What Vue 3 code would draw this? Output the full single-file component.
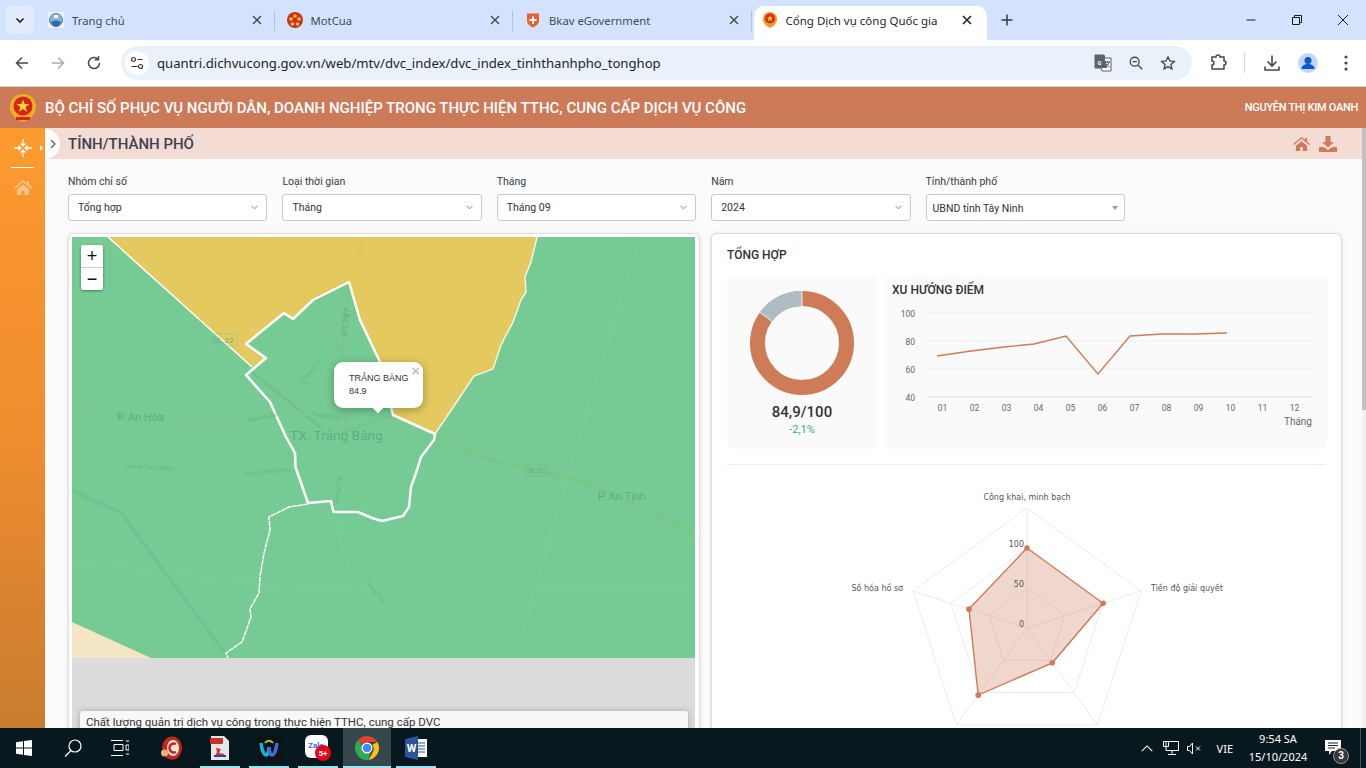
<script setup>
const tabs = [
  { title: 'Trang chủ', icon: 'globe' },
  { title: 'MotCua', icon: 'motcua' },
  { title: 'Bkav eGovernment', icon: 'bkav' }
]
const filters = [
  { label: 'Nhóm chỉ số', value: 'Tổng hợp' },
  { label: 'Loại thời gian', value: 'Tháng' },
  { label: 'Tháng', value: 'Tháng 09' },
  { label: 'Năm', value: '2024' },
  { label: 'Tỉnh/thành phố', value: 'UBND tỉnh Tây Ninh', native: true }
]

// line chart
const yTicks = [
  { label: '100', y: 313 },
  { label: '80', y: 341 },
  { label: '60', y: 369 },
  { label: '40', y: 397 }
]
const months = ['01', '02', '03', '04', '05', '06', '07', '08', '09', '10', '11', '12']
const trend = '937,356 971,351 1004,347 1034,344 1066,336 1098,374 1130,336 1162,334 1194,334 1227,333'

// radar
const cx = 185
const cy = 148
const angle = (i) => ((-90 + i * 72) * Math.PI) / 180
const pointsFor = (radii) =>
  radii
    .map((r, i) => `${(cx + r * Math.cos(angle(i))).toFixed(1)},${(cy + r * Math.sin(angle(i))).toFixed(1)}`)
    .join(' ')
const rings = [40, 80, 120].map((r) => pointsFor([r, r, r, r, r]))
const axes = [0, 1, 2, 3, 4].map((i) => ({
  x: cx + 120 * Math.cos(angle(i)),
  y: cy + 120 * Math.sin(angle(i))
}))
const values = [80, 80, 43, 83, 61]
const dots = values.map((r, i) => ({
  x: cx + r * Math.cos(angle(i)),
  y: cy + r * Math.sin(angle(i))
}))
const radarShape = pointsFor(values)

const taskCells = [
  { id: 'ccleaner', w: 40, gap: 0 },
  { id: 'pdf', w: 40, gap: 8, line: true },
  { id: 'webex', w: 40, gap: 9, line: true },
  { id: 'zalo', w: 40, gap: 9, line: true },
  { id: 'chrome', w: 48, gap: 5, line: true, on: true },
  { id: 'word', w: 40, gap: 5, line: true }
]
</script>

<template>
  <div class="screen">
    <div class="browser">
      <div class="tabstrip">
        <div class="tabmenu">
          <svg width="10" height="10" viewBox="0 0 10 10"><path d="M1.5 3.5 5 7l3.5-3.5" fill="none" stroke="#1f1f1f" stroke-width="1.6"/></svg>
        </div>
        <div v-for="t in tabs" :key="t.title" class="tab">
          <svg v-if="t.icon === 'globe'" class="fav" viewBox="0 0 16 16">
            <rect width="16" height="16" fill="#eef3f7"/>
            <circle cx="8" cy="8" r="6.5" fill="#8fb4d8" stroke="#5a7fa8"/>
            <path d="M3 10c3-2 7-2 10 0-1 3-3 4.5-5 4.5S4 13 3 10z" fill="#2c6ca8"/>
            <path d="M6 3h4v3H6z" fill="#f4f4f4"/>
          </svg>
          <svg v-else-if="t.icon === 'motcua'" class="fav" viewBox="0 0 16 16">
            <circle cx="8" cy="8" r="8" fill="#c8321f"/>
            <circle cx="8" cy="4" r="1.8" fill="#f2c14a"/>
            <circle cx="12" cy="7" r="1.8" fill="#f2c14a"/>
            <circle cx="10.5" cy="12" r="1.8" fill="#f2c14a"/>
            <circle cx="5.5" cy="12" r="1.8" fill="#f2c14a"/>
            <circle cx="4" cy="7" r="1.8" fill="#f2c14a"/>
          </svg>
          <svg v-else class="fav" viewBox="0 0 16 16">
            <path d="M2 1.5h12V9c0 3-3 5-6 6.5C5 14 2 12 2 9z" fill="#e8602c"/>
            <path d="M7 4.5h2V7h2.500v2H9v3H7V9H4.500V7H7z" fill="#fff"/>
          </svg>
          <span class="tabtitle">{{ t.title }}</span>
          <svg class="tabx" width="10" height="10" viewBox="0 0 10 10"><path d="M1 1l8 8M9 1 1 9" stroke="#474747" stroke-width="1.4"/></svg>
          <i class="tabsep"></i>
        </div>
        <div class="tab active">
          <svg class="fav" viewBox="0 0 16 16">
            <path d="M8 0c4 0 7 3 7 7 0 3-1.5 5-3 6.5L8 16l-4-2.500C2.500 12 1 10 1 7c0-4 3-7 7-7z" fill="#e8a020"/>
            <circle cx="8" cy="6.5" r="5" fill="#d8261c"/>
            <path d="M8 3l.9 2.500h2.600l-2.100 1.500.8 2.500L8 8l-2.200 1.500.8-2.500-2.100-1.500h2.600z" fill="#f8d32c"/>
          </svg>
          <span class="tabtitle dark">Cổng Dịch vụ công Quốc gia</span>
          <svg class="tabx" width="10" height="10" viewBox="0 0 10 10"><path d="M1 1l8 8M9 1 1 9" stroke="#1f1f1f" stroke-width="1.5"/></svg>
        </div>
        <svg class="newtab" width="12" height="12" viewBox="0 0 12 12"><path d="M6 .5v11M.5 6h11" stroke="#3a3a3a" stroke-width="1.5"/></svg>
        <div class="winbtns">
          <svg width="12" height="12" viewBox="0 0 12 12"><path d="M1.5 6h9" stroke="#1a1a1a"/></svg>
          <svg width="12" height="12" viewBox="0 0 12 12"><path d="M1.5 3.500h7v7h-7zM3.500 3.500V1.500h7v7h-2" fill="none" stroke="#1a1a1a"/></svg>
          <svg width="12" height="12" viewBox="0 0 12 12"><path d="M1 1l10 10M11 1 1 11" stroke="#1a1a1a"/></svg>
        </div>
      </div>

      <div class="toolbar">
        <svg class="navic" viewBox="0 0 16 16"><path d="M14 8H2.500M8 2.500 2.500 8 8 13.500" fill="none" stroke="#474747" stroke-width="1.5"/></svg>
        <svg class="navic" viewBox="0 0 16 16"><path d="M2 8h11.500M8 2.500 13.500 8 8 13.500" fill="none" stroke="#a8abb0" stroke-width="1.5"/></svg>
        <svg class="navic" viewBox="0 0 16 16"><path d="M13.500 8A5.500 5.500 0 1 1 11.800 4M12.500 1v3.800H8.700" fill="none" stroke="#474747" stroke-width="1.5"/></svg>
        <div class="omnibox">
          <span class="sitebtn">
            <svg width="14" height="14" viewBox="0 0 14 14"><circle cx="3.5" cy="3.5" r="2" fill="none" stroke="#333" stroke-width="1.2"/><path d="M7.500 3.500h5M1.500 10.500h6" stroke="#333" stroke-width="1.2"/><circle cx="10.5" cy="10.5" r="2" fill="none" stroke="#333" stroke-width="1.2"/></svg>
          </span>
          <span class="url">quantri.dichvucong.gov.vn/web/mtv/dvc_index/dvc_index_tinhthanhpho_tonghop</span>
          <svg class="omniic first" viewBox="0 0 18 18">
            <path d="M1 1h9l1 3h6v13H8l-1-3H1z" fill="#fff" stroke="#5a5a5a"/>
            <path d="M1 1h9l3 13H1z" fill="#5f6368"/>
            <text x="3.5" y="10.5" class="gl">G</text>
            <path d="M11 8h5M13.500 7v1.500M15 8.500c-.5 2-2 3.500-3.500 4M12 9.500c.5 1.500 2 3 3.500 3.500" fill="none" stroke="#444"/>
          </svg>
          <svg class="omniic" viewBox="0 0 18 18"><circle cx="7.5" cy="7.5" r="5" fill="none" stroke="#474747" stroke-width="1.5"/><path d="M11.500 11.500 16 16M5 7.500h5" stroke="#474747" stroke-width="1.5"/></svg>
          <svg class="omniic" viewBox="0 0 18 18"><path d="M9 2l2.100 4.700 5 .5-3.800 3.400 1.100 5L9 13l-4.400 2.600 1.100-5L1.900 7.200l5-.5z" fill="none" stroke="#474747" stroke-width="1.5"/></svg>
        </div>
        <svg class="toolic ext" viewBox="0 0 18 18"><path d="M3 3h4a2 2 0 0 1 4 0h4v4a2 2 0 0 1 0 4v4H3v-4a2 2 0 0 0 0-4z" fill="none" stroke="#474747" stroke-width="1.5"/></svg>
        <i class="toolsep"></i>
        <svg class="toolic" viewBox="0 0 18 18"><path d="M9 1.500v10M4.500 7.500 9 12l4.500-4.500M2 12.500V16h14v-3.500" fill="none" stroke="#474747" stroke-width="1.6"/></svg>
        <span class="avatar">
          <svg width="20" height="20" viewBox="0 0 20 20"><circle cx="10" cy="7.5" r="3.5" fill="#0b57d0"/><path d="M3.500 16c0-3.500 3-5 6.500-5s6.500 1.500 6.500 5z" fill="#0b57d0"/></svg>
        </span>
        <svg class="toolic" viewBox="0 0 18 18"><circle cx="9" cy="3" r="1.6" fill="#474747"/><circle cx="9" cy="9" r="1.6" fill="#474747"/><circle cx="9" cy="15" r="1.6" fill="#474747"/></svg>
      </div>

      <header class="appbar">
        <svg class="emblem" viewBox="0 0 28 28">
          <path d="M14 0c8 0 13 6 13 13 0 6-4 10-7 12l-6 3-6-3c-3-2-7-6-7-12C1 6 6 0 14 0z" fill="#eeb021"/>
          <circle cx="14" cy="12" r="9.5" fill="#d9231b"/>
          <path d="M14 5.500l1.700 4.600h4.800l-3.900 2.900 1.500 4.700L14 15l-4.100 2.700 1.500-4.700-3.900-2.900h4.800z" fill="#fbd92e"/>
          <path d="M7 23h14v3H7z" fill="#d9231b"/>
        </svg>
        <h1 class="apptitle">BỘ CHỈ SỐ PHỤC VỤ NGƯỜI DÂN, DOANH NGHIỆP TRONG THỰC HIỆN TTHC, CUNG CẤP DỊCH VỤ CÔNG</h1>
        <span class="username">NGUYỄN THỊ KIM OANH</span>
      </header>

      <div class="body">
        <aside class="sidebar">
          <div class="sideicon">
            <svg width="20" height="20" viewBox="0 0 20 20" fill="none" stroke="#fff" stroke-width="1.3">
              <path d="M10 1v6.500M7.800 5.500 10 7.800l2.200-2.300M10 19v-6.500M7.800 14.500 10 12.200l2.200 2.300M1 10h6.500M5.500 7.800 7.800 10l-2.300 2.200M19 10h-6.500M14.500 7.800 12.200 10l2.300 2.200"/>
            </svg>
            <i class="sidecaret"></i>
          </div>
          <i class="siderule"></i>
          <svg class="sidehome" width="18" height="15" viewBox="0 0 18 15"><path d="M9 0 0 7.500l1 1.200L9 2l8 6.700 1-1.200-3-2.500V1h-2.500v2zM3 9.500V15h4.500v-4h3v4H15V9.500L9 4.500z" fill="#fcc48a"/></svg>
        </aside>

        <main class="main">
          <div class="titlebar">
            <span class="collapse">
              <svg width="6" height="10" viewBox="0 0 6 10"><path d="M1 1l4 4-4 4" fill="none" stroke="#555" stroke-width="1.2"/></svg>
            </span>
            <h2 class="pagetitle">TỈNH/THÀNH PHỐ</h2>
            <svg class="titleic" width="17" height="14" viewBox="0 0 18 15"><path d="M9 0 0 7.500l1 1.200L9 2l8 6.700 1-1.200-3-2.500V1h-2.500v2zM3 9.500V15h4.500v-4h3v4H15V9.500L9 4.500z" fill="#cd7a58"/></svg>
            <svg class="titleic" width="18" height="16" viewBox="0 0 18 16"><path d="M6.500 0h5v6H15L9 11.500 3 6h3.500zM0 11h4.500L9 14l4.500-3H18v5H0z" fill="#cd7a58"/></svg>
          </div>

          <div class="filters">
            <div v-for="f in filters" :key="f.label" class="filter">
              <label>{{ f.label }}</label>
              <div class="select" :class="{ native: f.native }">
                <span>{{ f.value }}</span>
                <i v-if="f.native" class="caret"></i>
                <svg v-else width="7" height="5" viewBox="0 0 8 5"><path d="M.5.500 4 4 7.500.500" fill="none" stroke="#777"/></svg>
              </div>
            </div>
          </div>

          <div class="columns">
            <section class="mapcard">
              <div class="map">
                <svg class="mapsvg" viewBox="72 237 623 421" preserveAspectRatio="none">
                  <rect x="72" y="237" width="623" height="421" fill="#76cb94"/>
                  <path d="M108 237 252 367 266 358 246 344 284 313 293 319 313 300 349 282 360 320 380 362 393 415 435 434 456 403 474 376 493 369 501 345 513 322 521 300 526 292 525 277 531 262 537 237z" fill="#e4c95e"/>
                  <path d="M72 622 151 658H72z" fill="#f4e6c5"/>
                  <g fill="none" stroke-linejoin="round">
                    <path d="M72 490 121 513 225 653" stroke="#6bc593" stroke-width="4"/>
                    <path d="M252 372 320 427" stroke="#72c287" stroke-width="3"/>
                    <path d="M346 432 386 417 393 416" stroke="#74c48a" stroke-width="2"/>
                    <path d="M435 434 480 457 521 467 590 483 644 510 695 533" stroke="#78c784" stroke-width="3.5"/>
                    <path d="M72 409 227 426 268 414 321 415" stroke="#7ac98c" stroke-width="2"/>
                    <path d="M309 302 342 354M349 284 342 354 346 432" stroke="#78c689" stroke-width="2"/>
                    <path d="M266 237 309 302M364 237 350 282" stroke="#e7c550" stroke-width="2.500"/>
                    <path d="M195 310C207 312 215 308 225 300L262 274C272 271 280 274 287 277" stroke="#e7c550" stroke-width="2.500"/>
                    <path d="M340 472 338 530 360 600M640 237 590 400 520 640M72 560 300 590 690 585" stroke="#7ccf99" stroke-width=".7"/>
                  </g>
                  <path d="M252 367 108 237" stroke="#fff" stroke-width="1.5" fill="none"/>
                  <path d="M435 434 456 403 474 376 493 369 501 345 513 322 521 300 526 292 525 277 531 262 537 237" stroke="#f6f4e6" stroke-width="1.5" fill="none"/>
                  <path d="M308 504 289 507 269 517 270 530 264 553 260 577 259 593 250 609 251 617 242 642 226 653 228 658" stroke="#fff" stroke-width="1.5" stroke-dasharray="5 .7" fill="none"/>
                  <path d="M246 344 284 313 293 319 313 300 349 282 360 320 380 362 393 415 435 434 434 440 421 457 417 470 411 487 409 507 403 516 382 521 372 518 358 512 333.5 512 331 501 308 503 295.5 467 295 453 286 437 270 402 246 375 266 358z" fill="none" stroke="#fff" stroke-width="2.5" stroke-linejoin="round"/>
                  <rect x="210" y="334" width="27" height="12" rx="2" fill="none" stroke="#8ccb9c" stroke-width=".6"/>
                  <text x="223" y="343" class="roadno">QL.22</text>
                  <rect x="524" y="464" width="24" height="12" rx="2" fill="none" stroke="#67bc90" stroke-width=".7"/>
                  <text x="536" y="473" class="roadno">QL.22</text>
                  <text x="117" y="421" class="place">P. An Hòa</text>
                  <text x="598" y="500" class="place">P. An Tịnh</text>
                  <text x="290" y="440" class="placebig">TX. Trảng Bàng</text>
                  <text class="street big" transform="translate(347 336) rotate(-82)">ĐT.787</text>
                  <text class="street" transform="translate(302 387) rotate(-55)">22 Tháng 12</text>
                  <text class="street" transform="translate(249 422) rotate(-12)">Nguyễn Du</text>
                  <text class="street" transform="translate(312 415) rotate(10)">Nguyễn Du</text>
                  <text class="street" transform="translate(126 468) rotate(3)">Huỳnh Thị Hương</text>
                  <text class="street" transform="translate(245 476) rotate(-6)">Huỳnh Thị Hương</text>
                  <text class="street" transform="translate(339 502) rotate(-85)">Hùng Trắc</text>
                  <text class="street" transform="translate(365 582) rotate(50)">Trừng Trắc</text>
                </svg>
                <div class="zoomctl">
                  <span>+</span>
                  <span>−</span>
                </div>
                <div class="popup">
                  <span class="popclose">×</span>
                  <div>TRẢNG BÀNG</div>
                  <div>84.9</div>
                  <i class="poptip"></i>
                </div>
                <div class="mapfoot">
                  <div class="legendcard">Chất lượng quản trị dịch vụ công trong thực hiện TTHC, cung cấp DVC</div>
                </div>
              </div>
            </section>

            <section class="summary">
              <h3 class="sumtitle">TỔNG HỢP</h3>
              <div class="sumrow">
                <div class="scorebox">
                  <svg class="donut" width="106" height="106" viewBox="0 0 106 106">
                    <circle cx="53" cy="53" r="44.5" fill="none" stroke="#ce7b58" stroke-width="15"/>
                    <circle cx="53" cy="53" r="44.5" fill="none" stroke="#aebcc3" stroke-width="15" stroke-dasharray="42.2 300" transform="rotate(-144.4 53 53)"/>
                    <path d="M53 1v15M10.800 22.400 22.900 31.200" stroke="#fff" stroke-width=".8"/>
                  </svg>
                  <div class="score">84,9/100</div>
                  <div class="delta">-2,1%</div>
                </div>
                <div class="trendbox">
                  <h4>XU HƯỚNG ĐIỂM</h4>
                  <svg class="trendsvg" viewBox="885 300 442 130">
                    <g v-for="t in yTicks" :key="t.label">
                      <line x1="926" x2="1312" :y1="t.y" :y2="t.y" :stroke="t.label === '40' ? '#dfe3ec' : '#eeeff1'" />
                      <text x="915" :y="t.y + 3.5" class="axis" text-anchor="end">{{ t.label }}</text>
                    </g>
                    <text v-for="(m, i) in months" :key="m" :x="942.5 + i * 32" y="411" class="axis" text-anchor="middle">{{ m }}</text>
                    <text x="1312" y="425" class="axisname" text-anchor="end">Tháng</text>
                    <polyline :points="trend" fill="none" stroke="#ce7b58" stroke-width="1.4" />
                  </svg>
                </div>
              </div>
              <hr class="divider" />
              <div class="radarwrap">
                <svg class="radar" width="400" height="270" viewBox="0 0 400 270">
                  <g transform="translate(0 -5)">
                    <polygon v-for="r in rings" :key="r" :points="r" fill="none" stroke="#ececec" />
                    <line v-for="(a, i) in axes" :key="i" :x1="cx" :y1="cy" :x2="a.x" :y2="a.y" stroke="#ececec" />
                    <polygon :points="radarShape" fill="#ce7b58" fill-opacity=".3" stroke="#ce7b58" stroke-width="1.4" />
                    <circle v-for="(d, i) in dots" :key="i" :cx="d.x" :cy="d.y" r="2.8" fill="#ce7b58" />
                    <text :x="cx - 3" :y="cy - 81" class="rtick" text-anchor="end">100</text>
                    <text :x="cx - 3" :y="cy - 41" class="rtick" text-anchor="end">50</text>
                    <text :x="cx - 3" :y="cy - 1" class="rtick" text-anchor="end">0</text>
                    <text :x="cx" :y="cy - 128" class="rlabel" text-anchor="middle">Công khai, minh bạch</text>
                    <text :x="cx + 124" :y="cy - 37" class="rlabel">Tiến độ giải quyết</text>
                    <text :x="cx - 124" :y="cy - 37" class="rlabel" text-anchor="end">Số hóa hồ sơ</text>
                  </g>
                </svg>
              </div>
            </section>
          </div>
        </main>
        <div class="scroll"><i class="thumb"></i></div>
      </div>
    </div>

    <footer class="taskbar">
      <svg class="winlogo" width="16" height="16" viewBox="0 0 16 16"><path d="M0 2.200 7 1.200v6.300H0zM8 1l8-1v7.500H8zM0 8.500h7v6.300L0 13.800zM8 8.500h8V16l-8-1.100z" fill="#fff"/></svg>
      <svg class="searchic" width="18" height="18" viewBox="0 0 18 18"><circle cx="11" cy="7" r="6" fill="none" stroke="#fff" stroke-width="1.2"/><path d="M7 11.500 1 17.500" stroke="#fff" stroke-width="1.3"/></svg>
      <svg class="taskview" width="18" height="16" viewBox="0 0 18 16" fill="none" stroke="#fff"><path d="M0 .5h12M3 4.500h9v6H3zM0 15.500h12M15 1h3M15 5h3v5h-3zM15 14h3"/></svg>
      <div class="apps">
        <div v-for="c in taskCells" :key="c.id" class="appcell" :class="{ on: c.on }" :style="{ width: c.w + 'px', marginLeft: c.gap + 'px' }">
          <svg v-if="c.id === 'ccleaner'" width="22" height="24" viewBox="0 0 22 24">
            <ellipse cx="11" cy="12" rx="10" ry="11.5" fill="#c7261c"/>
            <ellipse cx="12" cy="12" rx="6" ry="8" fill="#f1e6da"/>
            <path d="M15 8a4.500 4.500 0 1 0 0 8" fill="none" stroke="#c7261c" stroke-width="2.5"/>
            <circle cx="3.5" cy="17" r="3.5" fill="#e5b27a"/>
          </svg>
          <svg v-else-if="c.id === 'pdf'" width="20" height="26" viewBox="0 0 20 26">
            <path d="M1 1h13l5 5v19H1z" fill="#e6e6e6"/>
            <rect x="0" y="3" width="13" height="6" rx="1" fill="#c9302c"/>
            <path d="M6 13l5 1-2 4 6 1-3 2H5l2-4z" fill="#d33"/>
            <path d="M4 20h12v2H4z" fill="#2b4a9b"/>
          </svg>
          <svg v-else-if="c.id === 'webex'" width="24" height="24" viewBox="0 0 24 24">
            <rect width="24" height="24" rx="5" fill="#111"/>
            <path d="M4 7c1 8 3 12 5 12s3-5 3-8" fill="none" stroke="#19b5d8" stroke-width="3.5"/>
            <path d="M20 7c-1 8-3 12-5 12s-3-5-3-8" fill="none" stroke="#3b6fe0" stroke-width="3.5"/>
            <path d="M8 7c2-3 6-3 8 0" fill="none" stroke="#88d44a" stroke-width="2"/>
          </svg>
          <svg v-else-if="c.id === 'zalo'" width="26" height="26" viewBox="0 0 26 26">
            <rect width="23" height="23" rx="6" fill="#fff"/>
            <text x="11" y="13" class="zalow">Zalo</text>
            <circle cx="18" cy="18" r="8" fill="#e2071a"/>
            <text x="18" y="21" class="badge5">5+</text>
          </svg>
          <svg v-else-if="c.id === 'chrome'" width="24" height="24" viewBox="0 0 24 24">
            <path d="M12 0a12 12 0 0 1 10.400 6H12a6 6 0 0 0-5.200 3L3.300 3.800A12 12 0 0 1 12 0z" fill="#e34133"/>
            <path d="M22.400 6a12 12 0 0 1-8.900 17.900l4.900-9A6 6 0 0 0 17.200 9z" fill="#fbc116"/>
            <path d="M13.500 23.900A12 12 0 0 1 3.300 3.800l5 8.500a6 6 0 0 0 7 3.500z" fill="#31a851"/>
            <circle cx="12" cy="12" r="5.5" fill="#fff"/>
            <circle cx="12" cy="12" r="4.3" fill="#4487f6"/>
          </svg>
          <svg v-else width="22" height="24" viewBox="0 0 22 24">
            <rect x="9" y="3" width="13" height="18" fill="#fff"/>
            <path d="M11 7h9M11 10h9M11 13h9M11 16h9" stroke="#2a5699"/>
            <path d="M0 3 13 0v24L0 21z" fill="#2a5699"/>
            <text x="6.5" y="15.5" class="wordw">W</text>
          </svg>
          <i v-if="c.line" class="appline"></i>
        </div>
      </div>
      <div class="tray">
        <svg width="12" height="7" viewBox="0 0 16 9"><path d="M1 8l7-7 7 7" fill="none" stroke="#fff" stroke-width="1.4"/></svg>
        <svg class="net" width="16" height="14" viewBox="0 0 16 14" fill="none" stroke="#fff"><path d="M3 .5h12.500v9H3zM.5 .5h5v5h-5zM9 9.500v3.500M5 13.500h8"/></svg>
        <svg class="spk" width="15" height="13" viewBox="0 0 15 13" fill="none" stroke="#fff"><path d="M.5 4.500h2l3-3.500v11l-3-3.500h-2zM9 4.500l4 4M13 4.500l-4 4"/></svg>
        <span class="lang">VIE</span>
        <div class="clock">
          <div>9:54 SA</div>
          <div>15/10/2024</div>
        </div>
        <div class="notify">
          <svg width="18" height="15" viewBox="0 0 18 15"><path d="M0 0h16v11H7l-3 4v-4H0z" fill="#fff"/><path d="M3 3h10M3 5.500h10M3 8h7" stroke="#222"/></svg>
          <span class="nbadge">3</span>
        </div>
      </div>
      <i class="traysep"></i>
    </footer>
  </div>
</template>

<style scoped>
.screen {
  width: 1366px;
  height: 768px;
  display: flex;
  flex-direction: column;
  overflow: hidden;
  font-family: Roboto, "Liberation Sans", sans-serif;
}

.browser {
  flex: 1;
  min-height: 0;
  display: flex;
  flex-direction: column;
  overflow: hidden;
}

/* chrome tabs */
.tabstrip {
  height: 40px;
  flex: none;
  background: #d3e3fd;
  display: flex;
  align-items: flex-start;
  padding-left: 6px;
  box-sizing: border-box;
}
.tabmenu {
  width: 28px;
  height: 28px;
  margin: 6px 4px 0 0;
  border-radius: 8px;
  background: #e2ecfc;
  display: flex;
  align-items: center;
  justify-content: center;
}
.tab {
  width: 238.5px;
  height: 40px;
  display: flex;
  align-items: center;
  padding-left: 10px;
  box-sizing: border-box;
  position: relative;
}
.tab.active {
  width: 233px;
  height: 34px;
  margin-top: 6px;
  padding: 0 0 6px 8px;
  background: #fff;
  border-radius: 10px 10px 0 0;
}
.fav {
  width: 16px;
  height: 16px;
  flex: none;
}
.tabtitle {
  margin-left: 8px;
  font: 11.3px "Noto Sans", sans-serif;
  color: #474b50;
  flex: 1;
  white-space: nowrap;
}
.tabtitle.dark {
  font-size: 11.5px;
  color: #1f1f1f;
}
.tabx {
  position: absolute;
  right: 15px;
  top: 15px;
}
.tab.active .tabx {
  right: 15px;
  top: 9px;
}
.tabsep {
  position: absolute;
  right: 2px;
  top: 11px;
  height: 20px;
  width: 1px;
  background: #a9c2ea;
}
.newtab {
  margin: 14px 0 0 14px;
}
.winbtns {
  margin-left: auto;
  display: flex;
  gap: 34px;
  padding: 14px 17px 0 0;
}

/* toolbar */
.toolbar {
  height: 47px;
  flex: none;
  background: #fff;
  border-bottom: 1px solid #d5d7da;
  box-sizing: border-box;
  display: flex;
  align-items: center;
  padding: 0 14px;
  border-radius: 8px 8px 0 0;
}
.navic {
  width: 16px;
  height: 16px;
  margin-right: 20px;
  flex: none;
}
.navic:nth-child(3) {
  margin-right: 19px;
}
.omnibox {
  width: 1071px;
  height: 34px;
  background: #ebf1fa;
  border-radius: 17px;
  display: flex;
  align-items: center;
  padding-left: 4px;
  box-sizing: border-box;
  flex: none;
}
.sitebtn {
  width: 24px;
  height: 24px;
  background: #fff;
  border-radius: 50%;
  display: flex;
  align-items: center;
  justify-content: center;
  flex: none;
}
.url {
  margin-left: 8px;
  font: 13.15px "Noto Sans", sans-serif;
  color: #1f1f1f;
  white-space: nowrap;
  flex: 1;
}
.omniic {
  width: 16px;
  height: 16px;
  margin-right: 16px;
  flex: none;
}
.omniic.first {
  width: 18px;
  height: 18px;
}
.gl {
  font: bold 6px Roboto, sans-serif;
  fill: #fff;
}
.toolic {
  width: 18px;
  height: 18px;
  flex: none;
}
.toolic.ext {
  margin-left: 17px;
}
.toolsep {
  width: 1px;
  height: 20px;
  background: #c7d7f0;
  margin: 0 18px 0 17px;
  flex: none;
}
.avatar {
  width: 20px;
  height: 20px;
  border-radius: 50%;
  background: #c2d7f8;
  margin: 0 19px 0 17px;
  flex: none;
}

/* app */
.appbar {
  height: 41px;
  flex: none;
  background: #cd7a58;
  display: flex;
  align-items: center;
  padding: 0 8px 0 9px;
  box-sizing: border-box;
}
.emblem {
  width: 28px;
  height: 28px;
  flex: none;
}
.apptitle {
  margin: 0 0 0 8px;
  font-size: 15px;
  font-weight: 500;
  color: #fff;
  white-space: nowrap;
}
.username {
  margin-left: auto;
  font-size: 11px;
  font-weight: 500;
  color: #fff;
  letter-spacing: -0.3px;
}
.body {
  flex: 1;
  min-height: 0;
  display: flex;
}
.sidebar {
  width: 45px;
  flex: none;
  background: linear-gradient(180deg, #fd9a2f 0%, #f08d2f 50%, #c97c30 100%);
  display: flex;
  flex-direction: column;
  align-items: center;
}
.sideicon {
  width: 45px;
  height: 39px;
  display: flex;
  align-items: center;
  justify-content: center;
  position: relative;
}
.sidecaret {
  position: absolute;
  right: 2px;
  top: 17px;
  border-left: 3px solid #fff;
  border-top: 3px solid transparent;
  border-bottom: 3px solid transparent;
}
.siderule {
  width: 23px;
  height: 1px;
  background: #fff;
}
.sidehome {
  margin-top: 12px;
}
.main {
  flex: 1;
  min-width: 0;
  background: #fbfbfb;
}
.titlebar {
  height: 31px;
  background: #f3dcd4;
  display: flex;
  align-items: center;
  padding-right: 25px;
  gap: 9px;
}
.collapse {
  width: 15px;
  height: 30px;
  background: #fff;
  border-radius: 0 15px 15px 0;
  display: flex;
  align-items: center;
  justify-content: center;
  flex: none;
  margin-right: -1px;
}
.pagetitle {
  margin: 0 auto 0 0;
  font-size: 15px;
  font-weight: 500;
  color: #3f4250;
}
.filters {
  display: grid;
  grid-template-columns: repeat(5, 199.4px);
  gap: 15px;
  padding: 16px 0 0 23px;
}
.filter label {
  display: block;
  font-size: 10.5px;
  line-height: 13px;
  color: #333a45;
  margin-bottom: 6px;
}
.select {
  height: 27px;
  background: #fff;
  border: 1px solid #c9c9c9;
  border-radius: 3px;
  box-sizing: border-box;
  display: flex;
  align-items: center;
  justify-content: space-between;
  padding: 0 8px 0 9px;
  font-size: 10.5px;
  color: #333;
}
.select.native {
  padding: 1px 6px 0;
}
.caret {
  border-top: 4px solid #999;
  border-left: 3px solid transparent;
  border-right: 3px solid transparent;
}
.columns {
  display: grid;
  grid-template-columns: 632px 631px;
  gap: 11px;
  padding: 12px 20px 0 23px;
  align-items: start;
}
.mapcard {
  background: #fff;
  border: 1px solid #dedede;
  border-radius: 6px 6px 0 0;
  padding: 3px 4px 0 3px;
  box-sizing: border-box;
  height: 520px;
  box-shadow: 0 1px 4px rgba(0, 0, 0, 0.12);
}
.map {
  width: 623px;
  height: 520px;
  background: #dcdcdc;
  position: relative;
}
.mapsvg {
  width: 623px;
  height: 421px;
  display: block;
}
.roadno {
  font: 8px Roboto, sans-serif;
  fill: #62b486;
  text-anchor: middle;
}
.place {
  font: 11px Roboto, sans-serif;
  fill: #5fae82;
}
.placebig {
  font: 13.7px Roboto, sans-serif;
  fill: #5fae82;
}
.street {
  font: 6px Roboto, sans-serif;
  fill: #64b689;
}
.street.big {
  font: 9px Roboto, sans-serif;
  fill: #5fae82;
}
.zoomctl {
  position: absolute;
  left: 9px;
  top: 8px;
  width: 22px;
  border-radius: 2px;
  overflow: hidden;
  box-shadow: 0 1px 3px rgba(0, 0, 0, 0.4);
}
.zoomctl span {
  display: block;
  height: 22.5px;
  background: #fff;
  text-align: center;
  font: 18px/22px "Liberation Sans", sans-serif;
  color: #111;
  box-sizing: border-box;
}
.zoomctl span:first-child {
  border-bottom: 1px solid #ccc;
}
.popup {
  position: absolute;
  left: 262px;
  top: 125px;
  width: 89px;
  height: 46px;
  box-sizing: border-box;
  padding: 10px 0 0 15px;
  background: #fff;
  border-radius: 9px;
  box-shadow: 0 2px 10px rgba(0, 0, 0, 0.3);
  font: 9px/13px "Liberation Sans", sans-serif;
  color: #333;
}
.popclose {
  position: absolute;
  right: 3px;
  top: 2px;
  font: bold 15px/14px "Liberation Sans", sans-serif;
  color: #c3c3c3;
}
.poptip {
  position: absolute;
  left: 38px;
  bottom: -6px;
  width: 12px;
  height: 12px;
  background: #fff;
  transform: rotate(45deg) scale(0.62);
}
.mapfoot {
  position: absolute;
  left: 8px;
  right: 7px;
  top: 474px;
}
.legendcard {
  height: 40px;
  background: #f8f8f8;
  border-radius: 3px;
  box-shadow: 0 0 6px rgba(0, 0, 0, 0.25);
  padding: 5px 6px;
  box-sizing: border-box;
  font-size: 11.5px;
  line-height: 12px;
  color: #333;
}
.summary {
  background: #fff;
  border: 1px solid #dcdcdc;
  border-radius: 6px 6px 0 0;
  box-shadow: 0 1px 4px rgba(0, 0, 0, 0.12);
  padding: 13px 15px 0;
  box-sizing: border-box;
  height: 520px;
}
.sumtitle {
  margin: 0;
  font-size: 12px;
  line-height: 16px;
  font-weight: 500;
  color: #333;
}
.sumrow {
  display: grid;
  grid-template-columns: 150px 442px;
  gap: 8px;
  margin-top: 12px;
}
.scorebox,
.trendbox {
  height: 174px;
  background: #fafafa;
  border-radius: 5px;
}
.scorebox {
  display: flex;
  flex-direction: column;
  align-items: center;
}
.donut {
  margin-top: 15px;
  display: block;
  flex: none;
}
.score {
  margin-top: 7px;
  font-size: 15px;
  line-height: 18px;
  font-weight: 500;
  color: #333;
}
.delta {
  margin-top: 2px;
  font-size: 11px;
  line-height: 14px;
  color: #35b37e;
}
.trendbox h4 {
  margin: 0;
  padding: 8px 0 0 7px;
  font-size: 12px;
  line-height: 14px;
  font-weight: 500;
  color: #333;
}
.trendsvg {
  display: block;
  width: 442px;
  height: 130px;
  margin-top: 3px;
}
.axis {
  font: 8.5px Roboto, sans-serif;
  fill: #666;
}
.axisname {
  font: 10px Roboto, sans-serif;
  fill: #666;
}
.divider {
  margin: 15px 0 0;
  border: 0;
  border-top: 1px solid #ebeef5;
}
.radarwrap {
  display: flex;
  justify-content: center;
  padding-top: 20px;
}
.radar {
  margin-left: 31px;
  flex: none;
}
.rlabel {
  font: 8px "DejaVu Sans", sans-serif;
  fill: #555;
}
.rtick {
  font: 8px "DejaVu Sans", sans-serif;
  fill: #555;
}
.scroll {
  width: 4px;
  flex: none;
  background: #f1f1f1;
}
.thumb {
  display: block;
  height: 282px;
  background: #c1c1c1;
}

/* windows taskbar */
.taskbar {
  height: 40px;
  flex: none;
  background: #07191f;
  display: flex;
  align-items: center;
  position: relative;
}
.winlogo {
  margin-left: 16px;
  flex: none;
}
.searchic {
  margin-left: 32px;
  flex: none;
}
.taskview {
  margin-left: 29px;
  flex: none;
}
.apps {
  display: flex;
  margin-left: 23px;
  height: 40px;
}
.appcell {
  height: 40px;
  display: flex;
  align-items: center;
  justify-content: center;
  position: relative;
  flex: none;
}
.appcell.on {
  background: #33474c;
}
.appline {
  position: absolute;
  left: 0;
  right: 0;
  bottom: 0;
  height: 2px;
  background: #9be5f2;
}
.zalow {
  font: bold 8px Roboto, sans-serif;
  fill: #1c6fe8;
  text-anchor: middle;
}
.badge5 {
  font: bold 8px Roboto, sans-serif;
  fill: #fff;
  text-anchor: middle;
}
.wordw {
  font: bold 11px Roboto, sans-serif;
  fill: #fff;
  text-anchor: middle;
}
.tray {
  margin-left: auto;
  display: flex;
  align-items: center;
  height: 40px;
  padding-right: 17px;
  color: #fff;
}
.net {
  margin-left: 10px;
}
.spk {
  margin-left: 8px;
}
.lang {
  margin-left: 15px;
  font: 11px "Noto Sans", sans-serif;
}
.clock {
  margin-left: 13px;
  width: 64px;
  text-align: center;
  font: 11px/18px "Noto Sans", sans-serif;
}
.notify {
  margin-left: 15px;
  width: 24px;
  height: 24px;
  position: relative;
  padding-top: 4px;
  box-sizing: border-box;
}
.nbadge {
  position: absolute;
  left: 8px;
  top: 12px;
  width: 16px;
  height: 16px;
  border-radius: 50%;
  background: #33373a;
  border: 1px solid #9a9a9a;
  box-sizing: border-box;
  font: bold 10px/14px Roboto, sans-serif;
  text-align: center;
  color: #fff;
}
.traysep {
  position: absolute;
  right: 5px;
  top: 0;
  bottom: 0;
  width: 1px;
  background: #46555a;
}
</style>

<style>
html,
body {
  margin: 0;
  background: #fff;
  overflow: hidden;
}
</style>
